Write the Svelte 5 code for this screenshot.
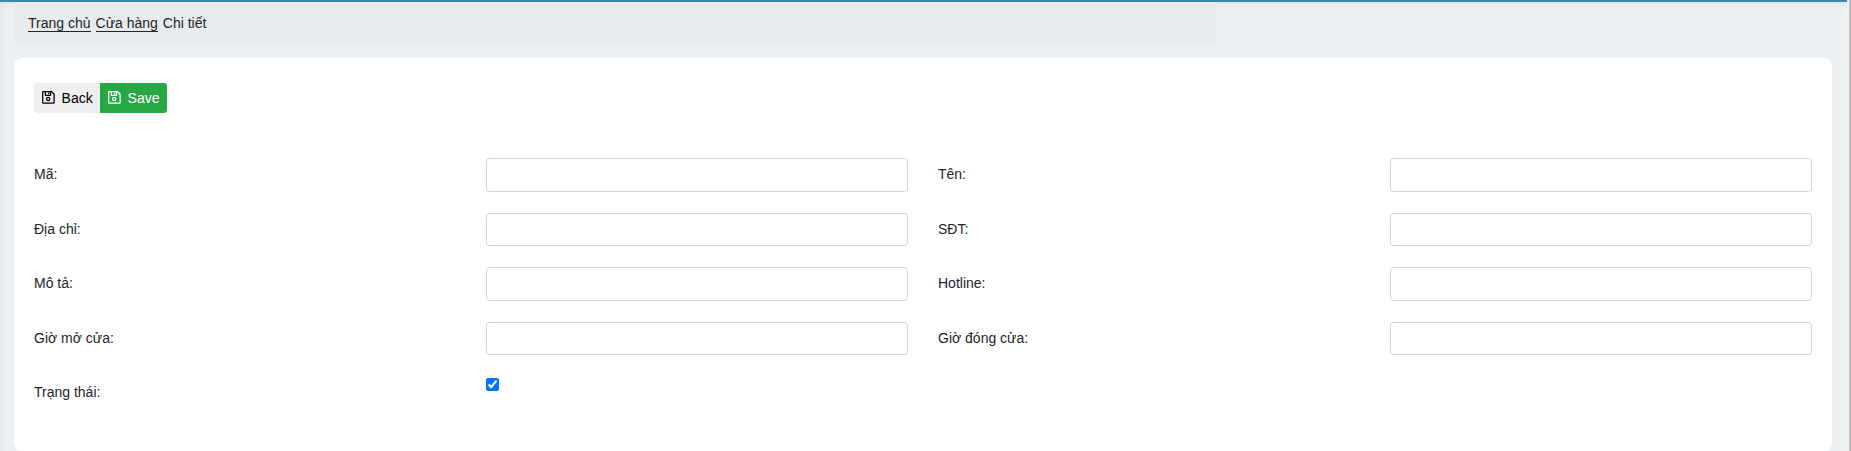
<script>
  const fields = [
    ['Mã:', 'Tên:'],
    ['Địa chỉ:', 'SĐT:'],
    ['Mô tả:', 'Hotline:'],
    ['Giờ mở cửa:', 'Giờ đóng cửa:']
  ];
  let active = $state(true);
</script>

{#snippet saveIcon()}
  <svg class="icon" viewBox="0 0 13 13" width="13" height="13" fill="none" stroke="currentColor" stroke-width="1.25" stroke-linejoin="round">
    <path d="M1.3 .7h8.3l2.5 2.5v8.2q0 .6-.6.6H1.3q-.6 0-.6-.6V1.3q0-.6.6-.6z" />
    <path d="M3.4 .7v3.6h5.2V.7M6.7 1.4v1.8" />
    <circle cx="6.2" cy="7.9" r="1.6" />
  </svg>
{/snippet}

<div class="page">
  <header></header>
  <main>
    <nav>
      <a href="#home">Trang chủ</a>
      <a href="#stores">Cửa hàng</a>
      <span>Chi tiết</span>
    </nav>
    <section class="card">
      <div class="actions">
        <button class="back">{@render saveIcon()}Back</button>
        <button class="save">{@render saveIcon()}Save</button>
      </div>
      <form>
        {#each fields as row, r}
          {#each row as label, c}
            <label for="f{r}{c}">{label}</label>
            <div class="cell"><input class="control" type="text" id="f{r}{c}" /></div>
          {/each}
        {/each}
        <label for="active">Trạng thái:</label>
        <div class="cell"><input class="check" type="checkbox" id="active" bind:checked={active} /></div>
      </form>
    </section>
  </main>
</div>

<style>
  :global(body) {
    background: #c1bfbf;
    overflow: hidden;
  }
  .page {
    box-sizing: border-box;
    width: 1849px;
    height: 451px;
    padding-right: 2px;
    overflow: hidden;
    background: linear-gradient(90deg, #e3e7ea, #ecf0f3 7px, #ecf0f3 1846px, #f1f2f3 1847px);
    font: 14px/21px "Liberation Sans", Arial, sans-serif;
    color: #212529;
  }
  header {
    position: relative;
    height: 2px;
    background: #3989a6;
    box-shadow: 0 1px 6px rgba(0, 0, 0, 0.16);
  }
  main {
    padding: 0 15px 0 14px;
  }
  nav {
    position: relative;
    box-sizing: border-box;
    display: flex;
    gap: 5px;
    width: 1202px;
    height: 42px;
    padding: 11px 14px;
    border-radius: 4px;
    background: #e8ebee;
  }
  nav a {
    height: 18px;
    border-bottom: 1px solid #212529;
    color: inherit;
    text-decoration: none;
  }
  .card {
    box-sizing: border-box;
    height: 393px;
    margin-top: 14px;
    padding: 25px 5px 0;
    border-radius: 8px;
    background: #fff;
  }
  .actions {
    display: flex;
    padding-left: 15px;
  }
  button {
    display: flex;
    align-items: center;
    height: 30px;
    padding: 0 7px 0 8px;
    border: 0;
    font: 14px/30px "Liberation Sans", Arial, sans-serif;
  }
  .icon {
    flex: none;
    margin: -1px 6.6px 0 0;
  }
  .back {
    width: 66px;
    border-radius: 3px 0 0 3px;
    background: #efefef;
    color: #000;
  }
  .save {
    width: 67px;
    border-radius: 0 3px 3px 0;
    background: #28a745;
    color: #fff;
  }
  form {
    display: grid;
    grid-template-columns: repeat(4, 452px);
    grid-auto-rows: 33.5px;
    row-gap: 21px;
    margin-top: 45.25px;
  }
  label {
    padding: 6px 15px;
  }
  .cell {
    padding: 0 15px;
  }
  .control {
    display: block;
    box-sizing: border-box;
    width: 100%;
    height: 33.5px;
    border: 1px solid #ced4da;
    border-radius: 3.5px;
    background: #fff;
  }
  .check {
    display: block;
    width: 13px;
    height: 13px;
    margin: 2px 0 0;
  }
</style>
